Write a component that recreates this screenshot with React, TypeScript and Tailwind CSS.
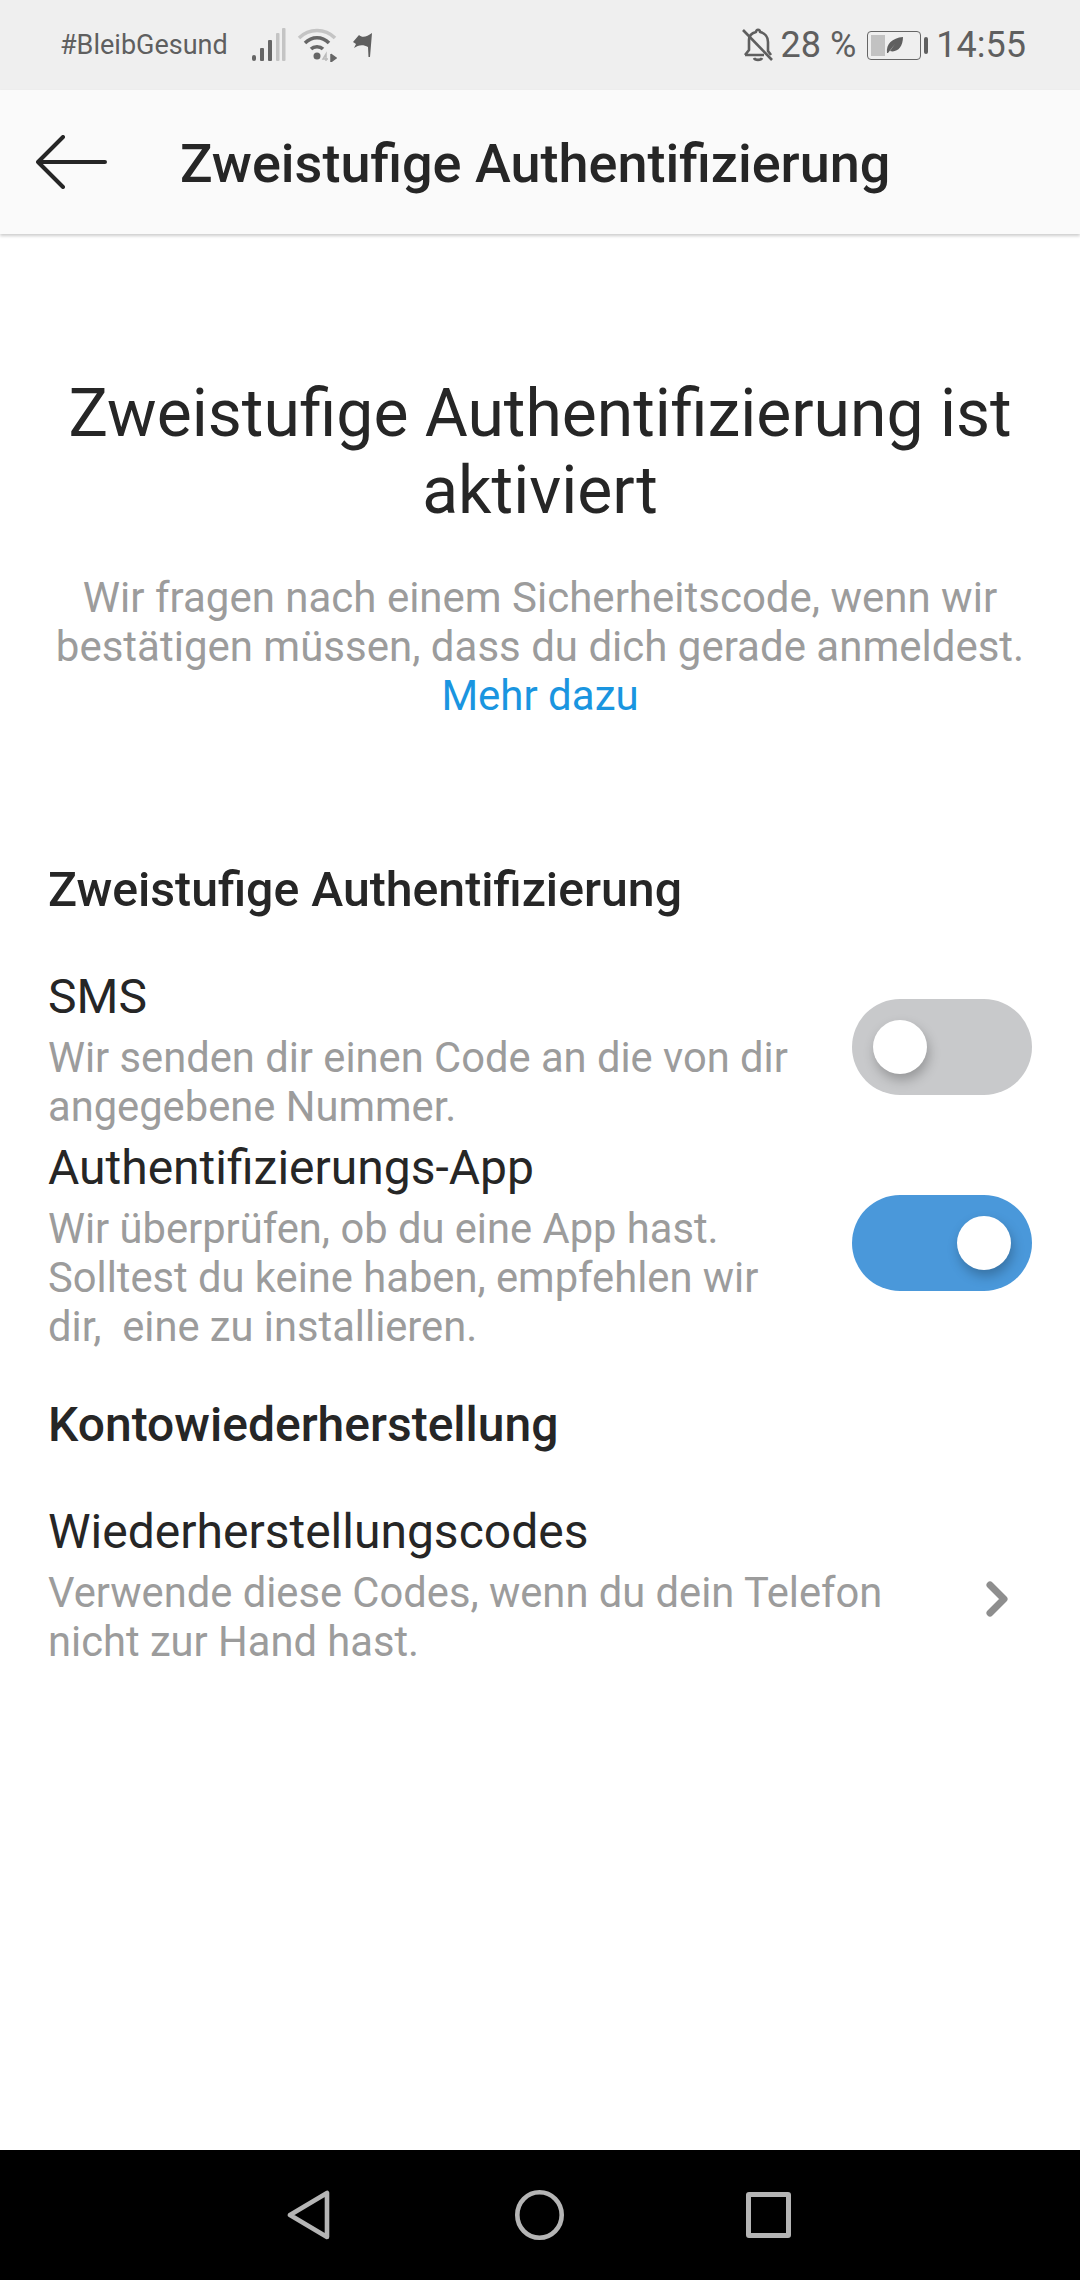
import { ChevronRight } from "lucide-react";

const roboto = "font-['Roboto',sans-serif]";

function SignalIcon() {
  return (
    <svg width="36" height="36" viewBox="0 0 36 36" className="block">
      <rect x="1" y="28" width="4" height="6" rx="2" fill="#666" />
      <rect x="9" y="21" width="4" height="13" rx="1" fill="#666" />
      <rect x="17" y="13" width="4" height="21" rx="1" fill="#666" />
      <rect x="25" y="6" width="3.5" height="28" rx="1" fill="#c4c4c4" />
      <rect x="31" y="1" width="3.5" height="33" rx="1" fill="#c4c4c4" />
    </svg>
  );
}

function WifiIcon() {
  return (
    <svg width="40" height="34" viewBox="0 0 40 34" className="block" fill="none">
      <path d="M2 10C12 0 28 0 38 10" stroke="#c4c4c4" strokeWidth="3.5" />
      <path d="M8 15C15 8 25 8 32 15" stroke="#666" strokeWidth="3.5" />
      <path d="M14 21C17 18 23 18 26 21" stroke="#666" strokeWidth="3.5" />
      <circle cx="20" cy="28" r="3.5" fill="#666" />
      <path d="M29 33V26L26 31H31" stroke="#bbb" strokeWidth="1.5" />
      <path d="M34 26V34M35 27L39 30L35 33Z" stroke="#666" strokeWidth="1.5" fill="#666" />
    </svg>
  );
}

function FlagIcon() {
  return (
    <svg width="20" height="26" viewBox="0 0 20 26" className="block">
      <path d="M0 10L6 3C9 6 14 5 19 1L17 25H15.5L15 15C10 12 5 13 1 16L3 12Z" fill="#5f5f5f" />
    </svg>
  );
}

function BellOffIcon() {
  return (
    <svg width="32" height="34" viewBox="0 0 32 34" className="block" fill="none" stroke="#5f5f5f" strokeWidth="2.6">
      <path d="M7 12C7 8 10 5 14 4C14 1 18 1 18 4C23 5 26 9 26 14V23L29 27M3 27H22M7 12V22L3 27" strokeLinejoin="round" />
      <path d="M12 30C13 32.5 19 32.5 20 30" />
      <path d="M1 2L30 32" />
    </svg>
  );
}

function BatteryIcon() {
  return (
    <div className="flex items-center gap-[3px]">
      <div className="flex h-[29px] w-[54px] items-center rounded-[4px] border-[1.5px] border-[#666] p-[3px]">
        <div className="h-full w-[14px] bg-[#c2c2c2]" />
        <svg width="18" height="18" viewBox="0 0 18 18" className="ml-[1px] block">
          <path d="M1 17C0 8 6 2 17 1C17 11 11 17 4 15L9 8L2 17Z" fill="#5f5f5f" />
        </svg>
      </div>
      <div className="h-[17px] w-[4px] rounded-full bg-[#5f5f5f]" />
    </div>
  );
}

function StatusBar() {
  return (
    <div className="flex h-[90px] items-center justify-between bg-[#efefef] pl-[60px] pr-[54px] text-[#5f5f5f]">
      <div className="flex items-center">
        <span className="text-[27px]">#BleibGesund</span>
        <div className="ml-[23px]">
          <SignalIcon />
        </div>
        <div className="ml-[10px]">
          <WifiIcon />
        </div>
        <div className="ml-[16px]">
          <FlagIcon />
        </div>
      </div>
      <div className="flex items-center">
        <BellOffIcon />
        <span className="ml-[7px] text-[36px]">28 %</span>
        <div className="ml-[11px]">
          <BatteryIcon />
        </div>
        <span className="ml-[8px] text-[36px]">14:55</span>
      </div>
    </div>
  );
}

function Header() {
  return (
    <div className="flex h-[144px] items-center bg-[#fafafa] pl-[36px] shadow-[0_2px_3px_rgba(0,0,0,0.2)]">
      <svg width="71" height="54" viewBox="0 0 71 54" fill="none" stroke="#262626" strokeWidth="4" strokeLinecap="round" strokeLinejoin="round" className="block">
        <path d="M69 27H2M27 2L2 27L27 52" />
      </svg>
      <h1 className="ml-[73px] mt-[2px] text-[54px] font-medium text-[#262626]">Zweistufige Authentifizierung</h1>
    </div>
  );
}

function Toggle({ on }: { on?: boolean }) {
  return (
    <div className={`flex h-[96px] w-[180px] shrink-0 items-center rounded-full px-[21px] ${on ? "justify-end bg-[#4a98da]" : "bg-[#c8c9cb]"}`}>
      <div className="h-[54px] w-[54px] rounded-full bg-white shadow-[2px_6px_12px_rgba(0,0,0,0.25)]" />
    </div>
  );
}

function OptionText({ title, lines }: { title: string; lines: string[] }) {
  return (
    <div>
      <div className="text-[48px] leading-[56px] text-[#262626]">{title}</div>
      <div className="mt-[8px] whitespace-pre text-[41.7px] leading-[49px] text-[#9c9c9c]">
        {lines.map((l) => (
          <div key={l}>{l}</div>
        ))}
      </div>
    </div>
  );
}

export default function App() {
  return (
    <div className={`${roboto} flex h-[2280px] w-[1080px] flex-col overflow-hidden bg-white`}>
      <StatusBar />
      <Header />

      <main className="flex-1 px-[48px]">
        <div className="-mx-[48px] mt-[141px] text-center">
          <h2 className="text-[66px] leading-[77px] text-[#262626]">
            Zweistufige Authentifizierung ist
            <br />
            aktiviert
          </h2>
          <p className="mt-[44px] text-[42px] leading-[49px] text-[#9c9c9c]">
            Wir fragen nach einem Sicherheitscode, wenn wir
            <br />
            bestätigen müssen, dass du dich gerade anmeldest.
            <br />
            <span className="text-[#1a95e0]">Mehr dazu</span>
          </p>
        </div>

        <h3 className="mt-[142px] text-[48.2px] font-medium leading-[56px] text-[#262626]">Zweistufige Authentifizierung</h3>

        <div className="mt-[51px] flex items-start justify-between">
          <OptionText title="SMS" lines={["Wir senden dir einen Code an die von dir", "angegebene Nummer."]} />
          <div className="mt-[30px]">
            <Toggle />
          </div>
        </div>

        <div className="mt-[9px] flex items-start justify-between">
          <OptionText
            title="Authentifizierungs-App"
            lines={["Wir überprüfen, ob du eine App hast.", "Solltest du keine haben, empfehlen wir", "dir,  eine zu installieren."]}
          />
          <div className="mt-[55px]">
            <Toggle on />
          </div>
        </div>

        <h3 className="mt-[46px] text-[48px] font-medium leading-[56px] text-[#262626]">Kontowiederherstellung</h3>

        <div className="mt-[51px] flex items-center justify-between">
          <OptionText title="Wiederherstellungscodes" lines={["Verwende diese Codes, wenn du dein Telefon", "nicht zur Hand hast."]} />
          <ChevronRight size={56} strokeWidth={3} className="mr-[7px] mt-[28px] text-[#8e8e8e]" />
        </div>
      </main>

      <nav className="flex h-[130px] items-center justify-center gap-[185px] bg-black">
        <svg width="43" height="50" viewBox="0 0 43 50" fill="none" stroke="#b5b5b5" strokeWidth="4.6" strokeLinejoin="round" className="block">
          <path d="M40 3V47L3 25Z" />
        </svg>
        <svg width="49" height="50" viewBox="0 0 49 50" fill="none" stroke="#b5b5b5" strokeWidth="4.6" className="block">
          <ellipse cx="24.5" cy="25" rx="22.2" ry="22.7" />
        </svg>
        <div className="-ml-[3px] mr-[3px] h-[46px] w-[45px] rounded-[3px] border-[5px] border-[#b5b5b5]" />
      </nav>
    </div>
  );
}
